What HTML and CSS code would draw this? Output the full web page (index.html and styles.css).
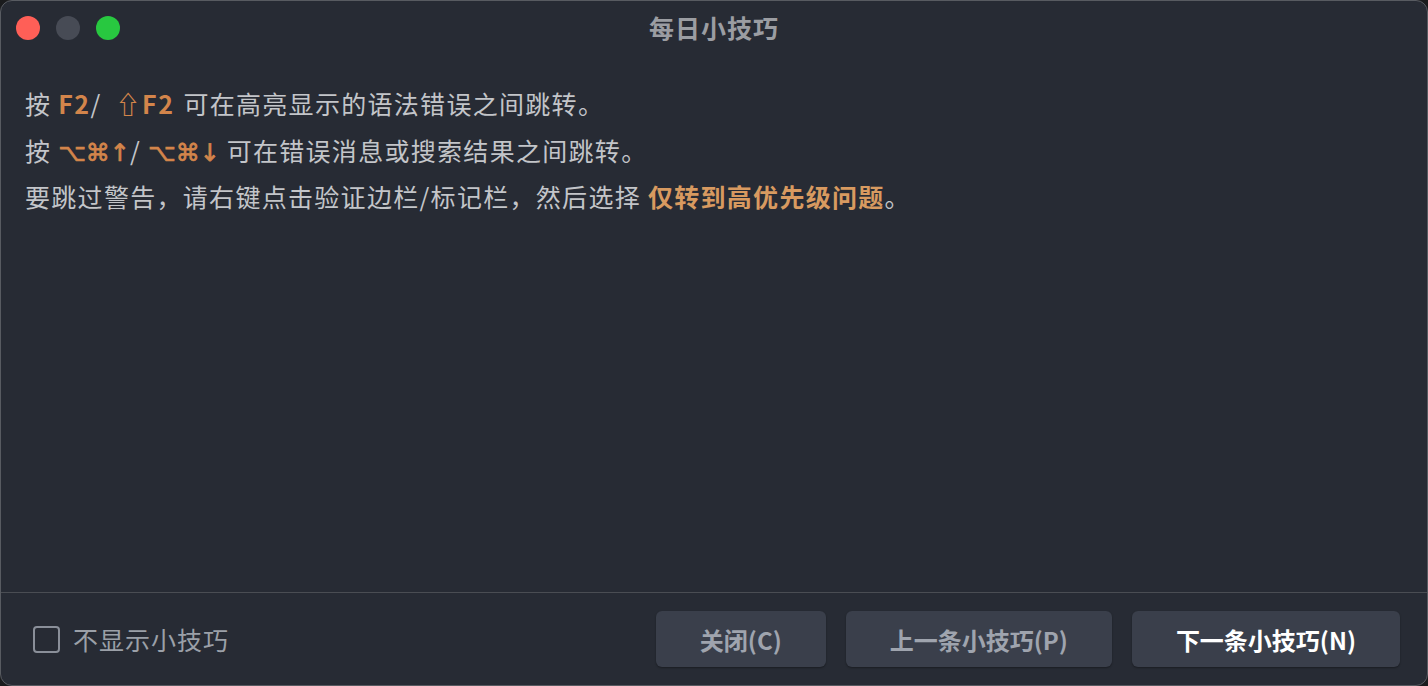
FILE: index.html
```html
<!DOCTYPE html>
<html lang="zh-CN">
<head>
    <meta charset="UTF-8">
    <meta name="viewport" content="width=device-width, initial-scale=1.0">
    <title>每日小技巧</title>
    <link rel="stylesheet" href="styles.css">
</head>
<body>
    <div class="window">
        <div class="titlebar">
            <div class="lights">
                <span class="light red"></span>
                <span class="light grey"></span>
                <span class="light green"></span>
            </div>
            <div class="title">每日小技巧</div>
        </div>
        <div class="content">
            <p class="tip">按 <span class="key">F2</span>/ <span class="key shift">⇧F2</span> 可在高亮显示的语法错误之间跳转。</p>
            <p class="tip">按 <span class="key sym">⌥⌘↑</span>/ <span class="key sym">⌥⌘↓</span> 可在错误消息或搜索结果之间跳转。</p>
            <p class="tip">要跳过警告，请右键点击验证边栏/标记栏，然后选择 <span class="action">仅转到高优先级问题</span>。</p>
        </div>
        <div class="footer">
            <label class="check">
                <span class="box"></span>
                <span>不显示小技巧</span>
            </label>
            <div class="buttons">
                <button class="btn">关闭(C)</button>
                <button class="btn">上一条小技巧(P)</button>
                <button class="btn primary">下一条小技巧(N)</button>
            </div>
        </div>
    </div>
</body>
</html>
```

FILE: styles.css
```css
html, body {
    margin: 0;
    height: 100%;
}
body {
    background-color: #1a1b1d;
    font-family: "Noto Sans CJK SC", "Noto Sans", sans-serif;
}
.window {
    box-sizing: border-box;
    width: 1428px;
    height: 686px;
    display: flex;
    flex-direction: column;
    background-color: #272b34;
    border: 1px solid #585b61;
    border-radius: 12px;
    overflow: hidden;
}
.titlebar {
    position: relative;
    height: 51px;
    display: flex;
    align-items: center;
    justify-content: center;
}
.lights {
    position: absolute;
    left: 15px;
    top: 15px;
    display: flex;
    gap: 16px;
}
.light {
    width: 24px;
    height: 24px;
    border-radius: 50%;
}
.red { background-color: #ff5f57; }
.grey { background-color: #474b55; }
.green { background-color: #28c840; }
.title {
    color: #9b9da2;
    font-size: 25px;
    font-weight: bold;
    letter-spacing: 1px;
}
.content {
    flex: 1;
    padding: 28px 24px 0;
}
.tip {
    margin: 0;
    font-size: 25px;
    line-height: 46.5px;
    color: #c3c5c9;
    letter-spacing: 1.3px;
}
.key {
    color: #d3854b;
    font-weight: bold;
    letter-spacing: 1.5px;
    line-height: 1;
}
.shift {
    margin-left: 7px;
    margin-right: 2px;
}
.sym {
    font-family: "DejaVu Sans", sans-serif;
    font-size: 24px;
    font-weight: normal;
    letter-spacing: 0;
    -webkit-text-stroke: 0.7px #d3854b;
}
.action {
    color: #d89a60;
    font-weight: bold;
}
.footer {
    height: 92px;
    border-top: 1px solid #4a4d53;
    display: flex;
    align-items: center;
    justify-content: space-between;
    padding: 0 27px 0 32px;
}
.check {
    display: flex;
    align-items: center;
    gap: 13px;
    color: #9ba0a8;
    font-size: 25px;
    letter-spacing: 1px;
}
.box {
    box-sizing: border-box;
    width: 27px;
    height: 27px;
    border: 2.5px solid #8a8f99;
    border-radius: 4px;
}
.buttons {
    display: flex;
    gap: 20px;
}
.btn {
    height: 56px;
    padding: 0 44px;
    border: none;
    border-radius: 6px;
    background-color: #3a3f4b;
    box-shadow: 0 1px 2px rgba(0, 0, 0, 0.35);
    color: #9fa4ae;
    font-family: "Noto Sans CJK SC", "Noto Sans", sans-serif;
    font-size: 24px;
    font-weight: bold;
}
.btn.primary {
    color: #ffffff;
}
```
